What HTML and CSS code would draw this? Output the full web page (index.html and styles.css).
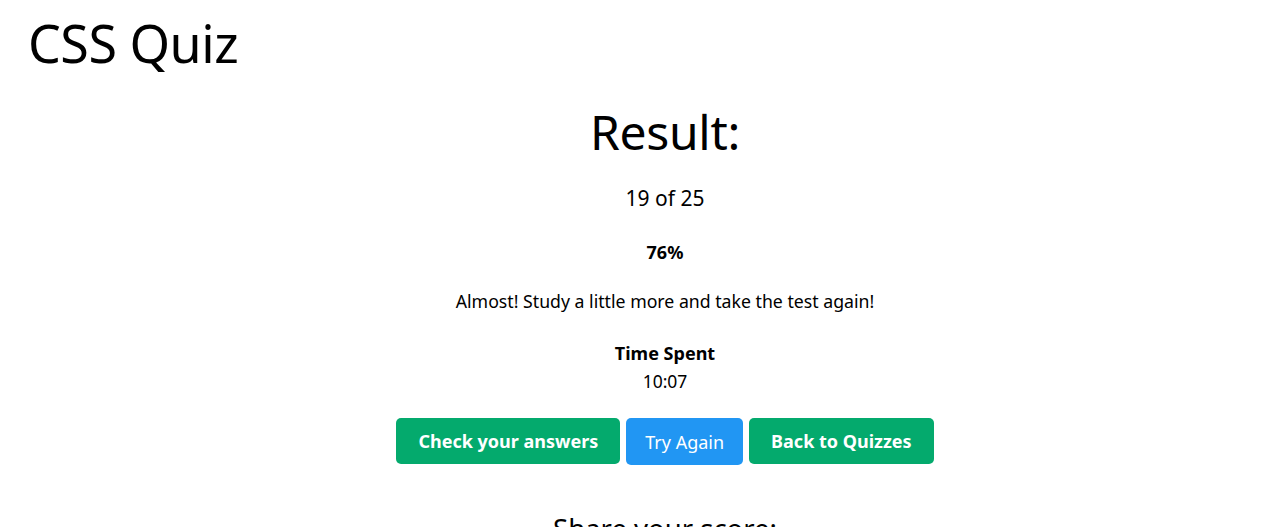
FILE: index.html
```html
<!DOCTYPE html>
<html lang="en">
<head>
<meta charset="utf-8">
<title>CSS Quiz</title>
<link rel="stylesheet" href="styles.css">
</head>
<body>
<header class="top">
  <h1 class="title">CSS Quiz</h1>
</header>
<main class="result">
  <h2 class="result-head">Result:</h2>
  <p class="score">19 of 25</p>
  <p class="percent">76%</p>
  <p class="message">Almost! Study a little more and take the test again!</p>
  <div class="time">
    <div class="time-label">Time Spent</div>
    <div class="time-value">10:07</div>
  </div>
  <div class="actions">
    <a class="btn btn-green" href="#">Check your answers</a>
    <a class="btn btn-blue" href="#">Try Again</a>
    <a class="btn btn-green" href="#">Back to Quizzes</a>
  </div>
  <h3 class="share">Share your score:</h3>
</main>
</body>
</html>
```

FILE: styles.css
```css
* { box-sizing: border-box; }
html, body { margin: 0; padding: 0; background: #fff; }
body {
  font-family: "Noto Sans", "Open Sans", sans-serif;
  color: #000;
  font-size: 16px;
  overflow: hidden;
  height: 527px;
}
.top { padding: 8px 0 0 28px; }
.title {
  margin: 0;
  font-weight: 400;
  font-size: 52px;
  line-height: 70px;
  letter-spacing: -0.5px;
}
.result {
  padding-left: 53px;
  text-align: center;
  display: flex;
  flex-direction: column;
  align-items: center;
}
.result-head {
  margin: 21px 0 0;
  font-weight: 400;
  font-size: 48px;
  line-height: 66px;
  letter-spacing: -0.3px;
}
.score { margin: 19px 0 0; font-size: 21px; line-height: 28px; }
.percent { margin: 28px 0 0; font-size: 18px; font-weight: 700; line-height: 24px; }
.message { margin: 25px 0 0; font-size: 17.7px; line-height: 24px; }
.time { margin-top: 27px; line-height: 26px; }
.time-label { font-weight: 700; font-size: 18px; }
.time-value { font-size: 17.5px; line-height: 30px; }
.actions { display: flex; gap: 6px; margin-top: 22px; }
.btn {
  display: inline-flex;
  align-items: center;
  justify-content: center;
  height: 46px;
  padding: 0 22px;
  border-radius: 5px;
  color: #fff;
  text-decoration: none;
  font-size: 18px;
  font-weight: 700;
}
.btn-green { background: #04AA6D; }
.btn-blue { background: #2196F3; font-weight: 400; padding: 0 19px; height: 47px; }
.share {
  margin: 46px 0 0;
  font-weight: 400;
  font-size: 27.5px;
  line-height: 36px;
}
```
